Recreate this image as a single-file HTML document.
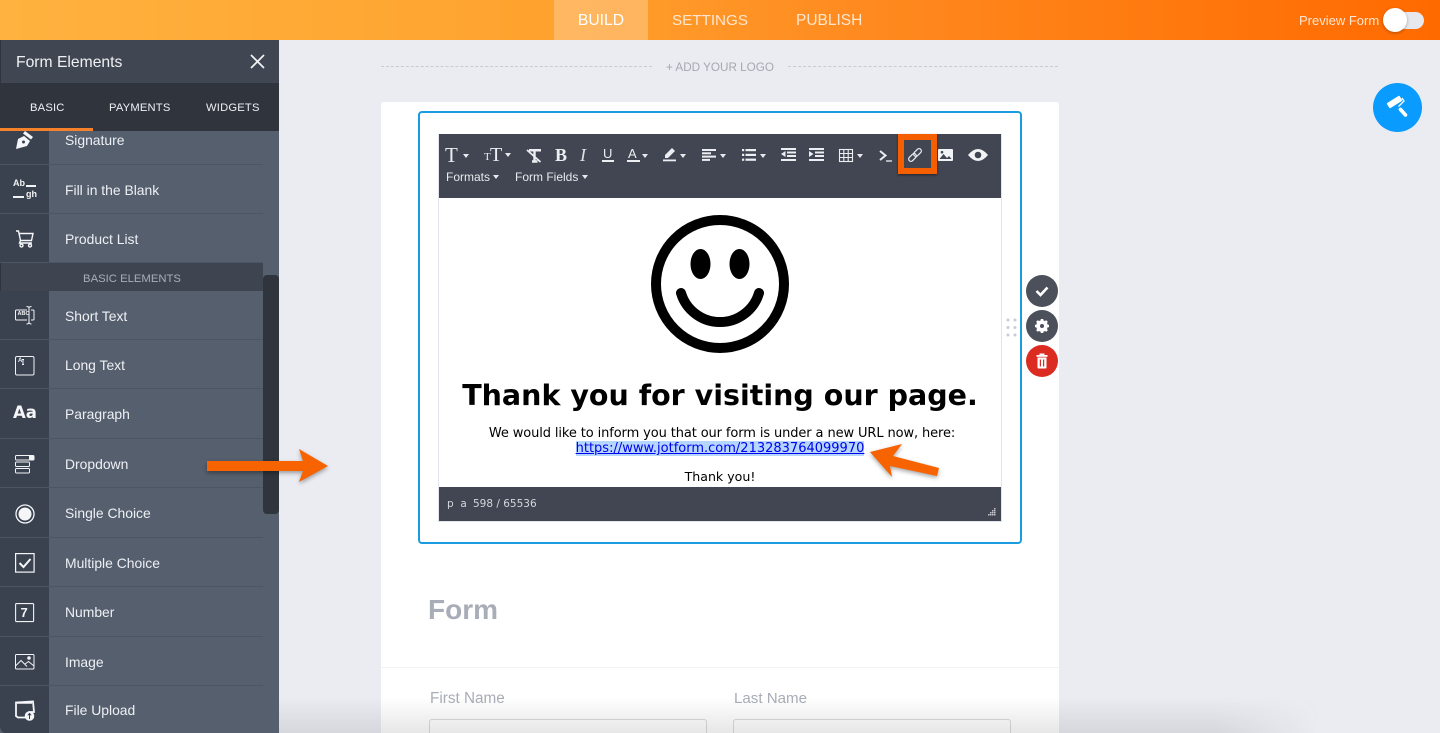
<!DOCTYPE html>
<html><head><meta charset="utf-8">
<style>
*{box-sizing:border-box}
html,body{margin:0;padding:0;width:1440px;height:733px;overflow:hidden;background:#ebecf2;font-family:"Liberation Sans",sans-serif}
#p{position:absolute;left:0;top:0;width:1440px;height:733px;overflow:hidden;background:#ebecf2}
.a{position:absolute;white-space:nowrap}
svg{position:absolute;overflow:visible}
.row{position:absolute;left:0;width:263px;background:#555f6e;border-bottom:1px solid #4b5563}
.row .ic{position:absolute;left:0;top:0;bottom:-1px;width:49px;background:#3a4250;border-bottom:1px solid #4b5563}
.row .t{position:absolute;left:65px;top:calc(50% + .5px);transform:translateY(-50%);color:#eef0f4;font-size:13.9px;white-space:nowrap}
.tb{position:absolute;color:#e8eaee;font-size:12px;white-space:nowrap}
.car{position:absolute;width:0;height:0;border-left:3.5px solid transparent;border-right:3.5px solid transparent;border-top:4px solid #e8eaee}
</style></head><body><div id="p">
<!-- top bar -->
<div class="a" style="left:0;top:0;width:1440px;height:40px;background:linear-gradient(90deg,#ffb23f 0%,#ffa22e 38%,#ff8a1f 60%,#ff6a00 100%)"></div>
<div class="a" style="left:554px;top:0;width:94px;height:40px;background:rgba(255,255,255,.25)"></div>
<div class="a" style="left:554px;top:1px;width:94px;height:40px;line-height:40px;text-align:center;color:#fff;font-size:15.7px">BUILD</div>
<div class="a" style="left:672px;top:1px;line-height:40px;color:#ffe6cf;font-size:15.2px">SETTINGS</div>
<div class="a" style="left:796px;top:1px;line-height:40px;color:#ffe6cf;font-size:15.5px">PUBLISH</div>
<div class="a" style="left:1299px;top:1px;line-height:40px;color:#ffe6d5;font-size:13px">Preview Form</div>
<div class="a" style="left:1384px;top:12px;width:40px;height:17px;border-radius:9px;background:#e6e8ee"></div>
<div class="a" style="left:1383px;top:8px;width:24px;height:24px;border-radius:50%;background:#fff;box-shadow:0 1px 3px rgba(0,0,0,.3)"></div>

<!-- logo -->
<div class="a" style="left:381px;top:66px;width:271px;border-top:1px dashed #c9cbd2"></div>
<div class="a" style="left:788px;top:66px;width:270px;border-top:1px dashed #c9cbd2"></div>
<div class="a" style="left:666px;top:61px;color:#a5a8b0;font-size:11.7px;line-height:14px">+ ADD YOUR LOGO</div>

<!-- paint button -->
<div class="a" style="left:1373px;top:83px;width:49px;height:49px;border-radius:50%;background:#0a9bff"></div>
<svg style="left:1373px;top:83px" width="49" height="49" viewBox="0 0 49 49"><rect x="14" y="16" width="15" height="6" rx="1" fill="#fff" transform="rotate(-32 21.500 19)"/><path d="M29 15L31 18L25.500 23.500" fill="none" stroke="#fff" stroke-width="1.300"/><path d="M27.500 26.500L32.500 32" stroke="#fff" stroke-width="3.600" stroke-linecap="round"/></svg>

<!-- form card -->
<div class="a" style="left:381px;top:102px;width:678px;height:640px;background:#fff;border-radius:3px"></div>
<div class="a" style="left:418px;top:111px;width:604px;height:433px;border:2px solid #1b9ce0;border-radius:4px;background:#fff"></div>

<!-- editor -->
<div class="a" style="left:438px;top:134px;width:564px;height:388px;background:#fff;border:1px solid #e3e5ec"></div>
<div class="a" style="left:439px;top:134px;width:562px;height:64px;background:#414652"></div>
<div class="a" style="left:439px;top:487px;width:562px;height:34px;background:#414652"></div>

<!-- toolbar icons -->
<div class="a" style="left:445px;top:143px;font:21px/24px 'Liberation Serif',serif;color:#eceef2">T</div>
<div class="car" style="left:463px;top:154px"></div>
<div class="a" style="left:484px;top:151px;font:11px/12px 'Liberation Serif',serif;color:#eceef2">T</div>
<div class="a" style="left:490px;top:144px;font:20px/22px 'Liberation Serif',serif;color:#eceef2">T</div>
<div class="car" style="left:505px;top:153px"></div>
<svg style="left:526px;top:147px" width="16" height="16" viewBox="0 0 16 16"><path d="M3 2H15V4.500H3Z" fill="#eceef2"/><path d="M8.500 3V14M6 14.500H11.500" stroke="#eceef2" stroke-width="2.400" fill="none"/><path d="M1 3L14.500 15" stroke="#eceef2" stroke-width="1.800"/></svg>
<div class="a" style="left:555px;top:146px;font:bold 18px/18px 'Liberation Serif',serif;color:#eceef2">B</div>
<div class="a" style="left:580px;top:146px;font:italic 18px/18px 'Liberation Serif',serif;color:#dfe1e6">I</div>
<div class="a" style="left:603px;top:147px;font:13px/13px 'Liberation Sans',sans-serif;color:#eceef2">U</div>
<div class="a" style="left:602px;top:160px;width:12px;height:1.500px;background:#eceef2"></div>
<div class="a" style="left:628px;top:147px;font:13px/13px 'Liberation Sans',sans-serif;color:#eceef2">A</div>
<div class="a" style="left:627px;top:160px;width:13px;height:1.500px;background:#eceef2"></div>
<div class="car" style="left:642px;top:154px"></div>
<svg style="left:662px;top:146px" width="16" height="16" viewBox="0 0 16 16"><path d="M3 9L10 2L13 5L6 12H3Z" fill="#eceef2"/><rect x="1" y="13.500" width="13" height="1.800" fill="#eceef2"/></svg>
<div class="car" style="left:680px;top:154px"></div>
<svg style="left:702px;top:149px" width="14" height="12" viewBox="0 0 14 12" fill="#eceef2"><rect width="14" height="2"/><rect y="3.300" width="9" height="2"/><rect y="6.600" width="14" height="2"/><rect y="9.900" width="8" height="2"/></svg>
<div class="car" style="left:720px;top:154px"></div>
<svg style="left:742px;top:149px" width="14" height="12" viewBox="0 0 14 12" fill="#eceef2"><rect width="2.200" height="2.200"/><rect x="3.500" width="10.500" height="2.200"/><rect y="4.800" width="2.200" height="2.200"/><rect x="3.500" y="4.800" width="10.500" height="2.200"/><rect y="9.600" width="2.200" height="2.200"/><rect x="3.500" y="9.600" width="10.500" height="2.200"/></svg>
<div class="car" style="left:760px;top:154px"></div>
<svg style="left:781px;top:148px" width="15" height="13" viewBox="0 0 15 13" fill="#eceef2"><rect width="15" height="2"/><rect x="6" y="3.500" width="9" height="2"/><rect x="6" y="7" width="9" height="2"/><rect y="11" width="15" height="2"/><path d="M4.500 3V9L0 6Z"/></svg>
<svg style="left:809px;top:148px" width="15" height="13" viewBox="0 0 15 13" fill="#eceef2"><rect width="15" height="2"/><rect x="6" y="3.500" width="9" height="2"/><rect x="6" y="7" width="9" height="2"/><rect y="11" width="15" height="2"/><path d="M0 3V9L4.500 6Z"/></svg>
<svg style="left:839px;top:149px" width="14" height="13" viewBox="0 0 14 13" fill="none" stroke="#eceef2" stroke-width="1.100"><rect x=".5" y=".5" width="13" height="12"/><path d="M4.800 .5V12.500M9.200 .5V12.500M.5 4.500H13.500M.5 8.500H13.500"/></svg>
<div class="car" style="left:857px;top:154px"></div>
<svg style="left:879px;top:150px" width="13" height="12" viewBox="0 0 13 12" fill="none" stroke="#eceef2"><path d="M1 1L6.500 5.500L1 10" stroke-width="2"/><path d="M7 11H13" stroke-width="1.300"/></svg>
<div class="a" style="left:898px;top:134px;width:39px;height:40px;border:6px solid #f65f00;box-shadow:0 1px 2px rgba(0,0,0,.5)"></div>
<svg style="left:908px;top:148px" width="14" height="14" viewBox="0 0 14 14" fill="none" stroke="#eceef2" stroke-width="1.200"><rect x="7.200" y="0" width="4.600" height="9" rx="2.300" transform="rotate(45 9.500 4.500)"/><rect x="2.200" y="5" width="4.600" height="9" rx="2.300" transform="rotate(45 4.500 9.500)"/></svg>
<svg style="left:938px;top:149px" width="15" height="12" viewBox="0 0 15 12"><rect width="15" height="12" rx="1" fill="#f2f3f5"/><path d="M1.500 10L5.500 5L9 9L11 7L13.500 10Z" fill="#414652"/><circle cx="4" cy="3.200" r="1.300" fill="#414652"/></svg>
<svg style="left:968px;top:149px" width="20" height="12" viewBox="0 0 20 12"><path d="M0 6Q5 0 10 0T20 6Q15 12 10 12T0 6Z" fill="#f2f3f5"/><circle cx="10" cy="6" r="3.300" fill="#414652"/></svg>
<div class="tb" style="left:446px;top:170px">Formats</div><div class="car" style="left:493px;top:175px"></div>
<div class="tb" style="left:515px;top:170px">Form Fields</div><div class="car" style="left:582px;top:175px"></div>

<!-- smiley -->
<svg style="left:640px;top:205px" width="160" height="160" viewBox="0 0 160 160">
<circle cx="80" cy="79" r="64" fill="none" stroke="#000" stroke-width="10"/>
<ellipse cx="60.500" cy="59" rx="10" ry="15"/><ellipse cx="99.500" cy="59" rx="10" ry="15"/>
<path d="M41 88A40.700 40.700 0 0 0 119 88" fill="none" stroke="#000" stroke-width="10" stroke-linecap="round"/>
</svg>

<!-- content text -->
<div class="a" style="left:439px;width:562px;top:377px;text-align:center;font:bold 28.500px/38px 'DejaVu Sans',sans-serif;color:#000">Thank you for visiting our page.</div>
<div class="a" style="left:441px;width:562px;top:426px;text-align:center;font:13px/15px 'DejaVu Sans',sans-serif;letter-spacing:-.11px;color:#000">We would like to inform you that our form is under a new URL now, here:</div>
<div class="a" style="left:576px;top:441px;width:288px;height:15px;background:#b5d6fd"></div>
<div class="a" style="left:439px;width:562px;top:441px;text-align:center;font:13px/15px 'DejaVu Sans',sans-serif;color:#00e;text-decoration:underline">https://www.jotform.com/213283764099970</div>
<div class="a" style="left:439px;width:562px;top:469px;text-align:center;font:12.600px/15px 'DejaVu Sans',sans-serif;color:#000">Thank you!</div>

<!-- status bar -->
<div class="a" style="left:447px;top:497px;font:10.500px/14px 'DejaVu Sans',sans-serif;color:#d5d7dc">p&nbsp;&nbsp;a</div>
<div class="a" style="left:473px;top:497px;font:10.500px/14px 'DejaVu Sans',sans-serif;color:#d5d7dc">598 / 65536</div>
<svg style="left:987px;top:508px" width="9" height="8" viewBox="0 0 9 8" fill="#c6c8ce"><rect x="7" y="0" width="1.500" height="1.500"/><rect x="5" y="2" width="1.500" height="1.500"/><rect x="7" y="2" width="1.500" height="1.500"/><rect x="3" y="4" width="1.500" height="1.500"/><rect x="5" y="4" width="1.500" height="1.500"/><rect x="7" y="4" width="1.500" height="1.500"/><rect x="1" y="6" width="1.500" height="1.500"/><rect x="3" y="6" width="1.500" height="1.500"/><rect x="5" y="6" width="1.500" height="1.500"/><rect x="7" y="6" width="1.500" height="1.500"/></svg>

<!-- link arrow -->
<svg style="left:860px;top:435px" width="90" height="50" viewBox="0 0 90 50"><path d="M10 17L42 9L33 21L79 33L77 41L30 31L32 42Z" fill="#f76300" style="filter:drop-shadow(0 2px 2px rgba(0,0,0,.35))"/></svg>

<!-- right handle + actions -->
<svg style="left:1006px;top:318px" width="12" height="20" fill="#c9ccd6"><circle cx="2" cy="2" r="1.500"/><circle cx="9" cy="2" r="1.500"/><circle cx="2" cy="9.500" r="1.500"/><circle cx="9" cy="9.500" r="1.500"/><circle cx="2" cy="17" r="1.500"/><circle cx="9" cy="17" r="1.500"/></svg>
<div class="a" style="left:1026px;top:275px;width:32px;height:32px;border-radius:50%;background:#4b505b"></div>
<div class="a" style="left:1026px;top:310px;width:32px;height:32px;border-radius:50%;background:#4b505b"></div>
<div class="a" style="left:1026px;top:345px;width:32px;height:32px;border-radius:50%;background:#dc2c22"></div>
<svg style="left:1026px;top:275px" width="32" height="32"><path d="M10.500 16L14.500 20L21.500 12.500" fill="none" stroke="#fff" stroke-width="2.600"/></svg>
<svg style="left:1026px;top:310px" width="32" height="32" viewBox="0 0 32 32"><circle cx="16" cy="16" r="4.300" fill="none" stroke="#fff" stroke-width="3"/><path d="M16 9V23M9 16H23M11 11L21 21M21 11L11 21" stroke="#fff" stroke-width="2.600"/><circle cx="16" cy="16" r="2" fill="#4b505b"/></svg>
<svg style="left:1026px;top:345px" width="32" height="32" viewBox="0 0 32 32" fill="#fff"><rect x="10.500" y="10" width="11" height="1.800"/><rect x="13.500" y="8.500" width="5" height="1.800"/><path d="M11.500 12.500H20.500V22.500Q20.500 23.500 19.500 23.500H12.500Q11.500 23.500 11.500 22.500ZM13.800 14.500V21.500H15V14.500ZM17 14.500V21.500H18.200V14.500Z" fill-rule="evenodd"/></svg>

<!-- form lower -->
<div class="a" style="left:428px;top:593px;font:bold 28px/34px 'Liberation Sans',sans-serif;color:#a9adb7">Form</div>
<div class="a" style="left:381px;top:667px;width:678px;height:1px;background:#f3f3f5"></div>
<div class="a" style="left:430px;top:690px;font:15.300px/18px 'Liberation Sans',sans-serif;color:#a9adb7">First Name</div>
<div class="a" style="left:734px;top:690px;font:15.100px/18px 'Liberation Sans',sans-serif;color:#a9adb7">Last Name</div>
<div class="a" style="left:429px;top:719px;width:278px;height:30px;border:1px solid #d8d9dd;border-radius:3px"></div>
<div class="a" style="left:733px;top:719px;width:278px;height:30px;border:1px solid #d8d9dd;border-radius:3px"></div>
<div class="a" style="left:279px;top:697px;width:1040px;height:36px;background:linear-gradient(180deg,rgba(120,120,125,0) 0%,rgba(120,120,125,.18) 100%);-webkit-mask-image:linear-gradient(90deg,#000 90%,transparent)"></div>

<!-- sidebar -->
<div class="a" style="left:0;top:40px;width:279px;height:693px;background:#555f6e;border-bottom-left-radius:8px;overflow:hidden;border-left:1px solid #2f343d"></div>
<div class="a" style="left:1px;top:40px;width:278px;height:43px;background:#414752"></div>
<div class="a" style="left:16px;top:41px;line-height:44px;color:#eef0f3;font-size:15.700px">Form Elements</div>
<svg style="left:250px;top:54px" width="15" height="15"><path d="M1 1L14 14M14 1L1 14" stroke="#f2f3f5" stroke-width="1.700"/></svg>
<div class="a" style="left:1px;top:83px;width:278px;height:48px;background:#2f343d"></div>
<div class="a" style="left:0;top:128px;width:93px;height:3px;background:#f5812a"></div>
<div class="a" style="left:30px;top:101px;color:#eef0f3;font-size:11.200px;line-height:14px;letter-spacing:.2px">BASIC</div>
<div class="a" style="left:109px;top:101px;color:#eef0f3;font-size:11.200px;line-height:14px;letter-spacing:.2px">PAYMENTS</div>
<div class="a" style="left:206px;top:101px;color:#eef0f3;font-size:11.200px;line-height:14px;letter-spacing:.2px">WIDGETS</div>

<div class="row" style="top:131px;height:34px"><div class="ic"></div><div class="t" style="top:1px;transform:none">Signature</div></div>
<div class="row" style="top:165px;height:49px"><div class="ic"></div><div class="t">Fill in the Blank</div></div>
<div class="row" style="top:214px;height:49px"><div class="ic"></div><div class="t">Product List</div></div>
<div class="a" style="left:1px;top:263px;width:262px;height:28px;background:#3f4550;color:#a9aeb8;font-size:11.300px;line-height:32px;text-align:center">BASIC ELEMENTS</div>
<div class="row" style="top:291px;height:49px"><div class="ic"></div><div class="t">Short Text</div></div>
<div class="row" style="top:340px;height:49px"><div class="ic"></div><div class="t">Long Text</div></div>
<div class="row" style="top:389px;height:50px"><div class="ic"></div><div class="t">Paragraph</div></div>
<div class="row" style="top:439px;height:49px"><div class="ic"></div><div class="t">Dropdown</div></div>
<div class="row" style="top:488px;height:50px"><div class="ic"></div><div class="t">Single Choice</div></div>
<div class="row" style="top:538px;height:49px"><div class="ic"></div><div class="t">Multiple Choice</div></div>
<div class="row" style="top:587px;height:50px"><div class="ic"></div><div class="t">Number</div></div>
<div class="row" style="top:637px;height:49px"><div class="ic"></div><div class="t">Image</div></div>
<div class="row" style="top:686px;height:47px;border-bottom:0"><div class="ic" style="border-bottom:0;border-bottom-left-radius:8px"></div><div class="t">File Upload</div></div>
<div class="a" style="left:263px;top:275px;width:16px;height:239px;background:#2f343d;border-radius:4px"></div>

<!-- sidebar icons -->
<svg style="left:15px;top:131px" width="20" height="20" viewBox="0 0 20 20"><path d="M1 18L3 8L9 5L15 10L12 15Z" fill="#f5f6f8"/><path d="M8 2.500L10 0L18 6L16 8.500Z" fill="#f5f6f8"/><circle cx="8.500" cy="11" r="1.500" fill="#3a4250"/></svg>
<div class="a" style="left:13px;top:178px;font:bold 9px/10px 'Liberation Sans',sans-serif;color:#f2f3f5">Ab</div>
<div class="a" style="left:26px;top:185px;width:10px;height:1.500px;background:#f2f3f5"></div>
<div class="a" style="left:13px;top:196px;width:11px;height:1.500px;background:#f2f3f5"></div>
<div class="a" style="left:26px;top:189px;font:bold 9px/10px 'Liberation Sans',sans-serif;color:#f2f3f5">gh</div>
<svg style="left:15px;top:230px" width="20" height="18" viewBox="0 0 20 18" fill="none" stroke="#f5f6f8" stroke-width="1.400"><path d="M1 1H3.500L5.500 10.500H16.500L18 3.500H4"/><path d="M5.500 10.500L4.500 13H17"/><circle cx="6.500" cy="15.500" r="1.500"/><circle cx="15" cy="15.500" r="1.500"/></svg>
<svg style="left:15px;top:306px" width="20" height="20" viewBox="0 0 20 20" fill="none" stroke="#f2f3f5" stroke-width="1"><path d="M12 4H1.500Q.5 4 .5 5V13Q.5 14 1.500 14H12"/><path d="M16 4H18Q19 4 19 5V13Q19 14 18 14H16"/><path d="M11.500 .5Q14 .5 14 2V16Q14 18 11.500 18M16.500 .5Q14 .5 14 2M16.500 18Q14 18 14 16"/></svg>
<div class="a" style="left:17.500px;top:311px;font:bold 5.500px/7px 'Liberation Sans',sans-serif;color:#f2f3f5">ABC</div>
<svg style="left:15px;top:356px" width="20" height="20" viewBox="0 0 20 20" fill="none" stroke="#f2f3f5" stroke-width="1"><rect x=".5" y=".5" width="18.500" height="18.500" rx="1.500"/><path d="M8 3.500V8.500M7 3.500H9M7 8.500H9"/></svg>
<div class="a" style="left:18px;top:358px;font:bold 6px/7px 'Liberation Sans',sans-serif;color:#f2f3f5">A</div>
<div class="a" style="left:13px;top:402px;font:bold 16.500px/22px 'DejaVu Sans',sans-serif;color:#f5f6f8">Aa</div>
<svg style="left:15px;top:455px" width="20" height="19" viewBox="0 0 20 19" fill="none" stroke="#f2f3f5" stroke-width="1"><rect x=".5" y=".5" width="18.500" height="4.500" rx="1"/><rect x=".5" y="7" width="14" height="4.500" rx="1"/><rect x=".5" y="13.500" width="14" height="4.500" rx="1"/><rect x="14.500" y="1" width="4" height="3.500" fill="#f2f3f5"/></svg>
<svg style="left:15px;top:504px" width="20" height="20" viewBox="0 0 20 20"><circle cx="10" cy="10" r="9" fill="none" stroke="#f5f6f8" stroke-width="1.300"/><circle cx="10" cy="10" r="6.500" fill="#f5f6f8"/></svg>
<svg style="left:15px;top:553px" width="20" height="20" viewBox="0 0 20 20" fill="none" stroke="#f5f6f8"><rect x=".6" y=".6" width="18.500" height="18.500" stroke-width="1.200"/><path d="M4.500 10L8.500 14L15.500 6" stroke-width="2"/></svg>
<svg style="left:15px;top:603px" width="20" height="20" viewBox="0 0 20 20" fill="none" stroke="#f2f3f5"><rect x=".6" y=".6" width="18" height="18" rx="1" stroke-width="1.100"/></svg>
<div class="a" style="left:20.500px;top:605px;font:bold 13px/15px 'Liberation Sans',sans-serif;color:#f2f3f5">7</div>
<svg style="left:15px;top:654px" width="20" height="16" viewBox="0 0 20 16" fill="none" stroke="#f2f3f5" stroke-width="1"><rect x=".5" y=".5" width="18.500" height="14.500" rx="1"/><path d="M.5 12L6 6.500L12 12.500M10 10L13.500 7.500L19 12"/><circle cx="14" cy="4" r="1.300" fill="#f2f3f5"/></svg>
<svg style="left:15px;top:701px" width="20" height="20" viewBox="0 0 20 20"><path d="M1 1.500L18 .5L19 11H14L12.500 16.500H3L1 15Z" fill="none" stroke="#f5f6f8" stroke-width="1.800"/><path d="M2 2H17" stroke="#f5f6f8" stroke-width="1.500"/><circle cx="14.500" cy="15" r="4.800" fill="#f5f6f8"/><path d="M14.500 18V12.500M12.800 14.300L14.500 12.500L16.200 14.300" stroke="#3a4250" stroke-width="1" fill="none"/></svg>

<!-- left arrow over sidebar -->
<svg style="left:200px;top:445px" width="135" height="45" viewBox="0 0 135 45"><path d="M7 16H103L99 4L128 21L99 37L103 26H7Z" fill="#f76300" style="filter:drop-shadow(0 2px 2px rgba(0,0,0,.35))"/></svg>
</div></body></html>
